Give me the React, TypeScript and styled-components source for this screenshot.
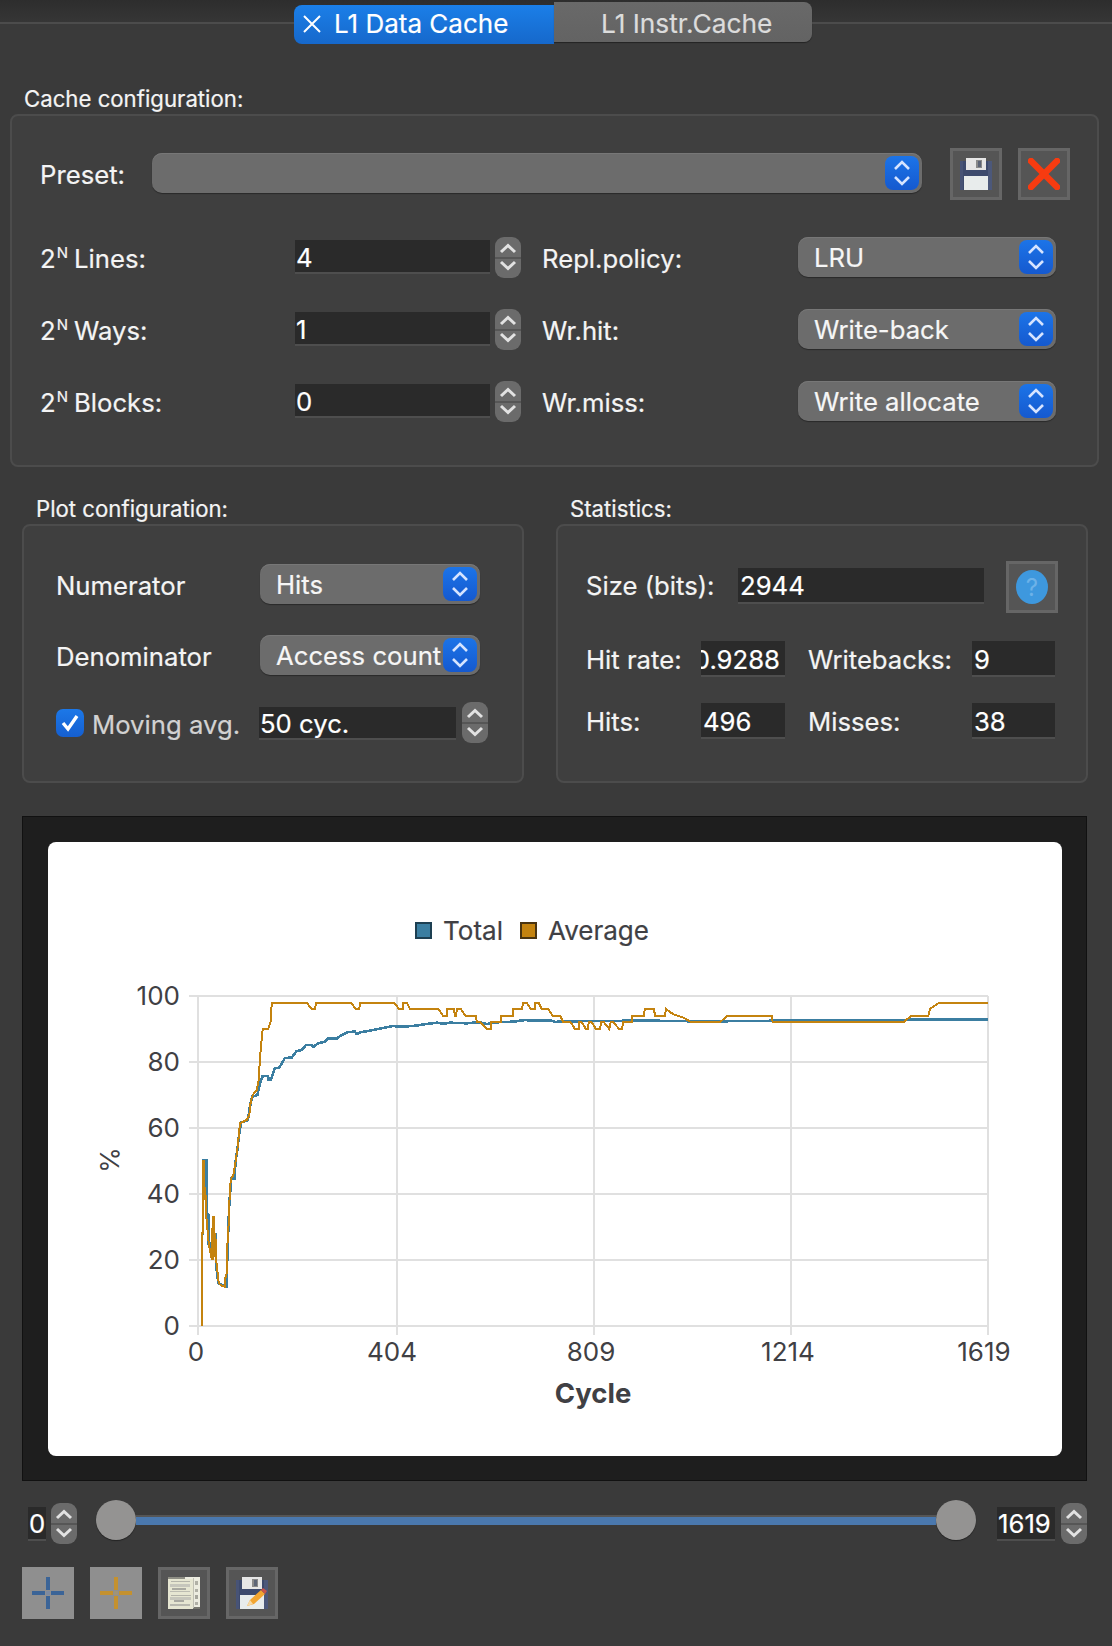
import React from "react";
import styled, { createGlobalStyle } from "styled-components";

const GlobalStyle = createGlobalStyle`
  html, body {
    margin: 0;
    padding: 0;
    background: #3a3a3a;
  }
  * {
    box-sizing: border-box;
  }
`;

const Page = styled.div`
  width: 1112px;
  height: 1646px;
  overflow: hidden;
  background: #3a3a3a;
  color: #f4f4f4;
  font-family: Inter, "Liberation Sans", sans-serif;
  font-size: 25.7px;
  -webkit-text-stroke: 0.2px;
`;

const TabBar = styled.div`
  display: flex;
  align-items: flex-start;
  height: 87px;
  padding: 2px 0 0 294px;
  background: linear-gradient(
    to bottom,
    #2d2d2d 0,
    #363636 22px,
    #4c4c4c 22px,
    #4c4c4c 24px,
    transparent 24px
  );
`;

const ActiveTab = styled.div`
  display: flex;
  align-items: center;
  gap: 13px;
  width: 260px;
  height: 39px;
  margin-top: 3px;
  padding: 0 0 2px 9px;
  border-radius: 8px 0 0 8px;
  background: linear-gradient(#1b7fe8, #1668cb);
  color: #fff;
  font-size: 26px;
`;

const IdleTab = styled.div`
  width: 258px;
  height: 40px;
  padding: 5px 0 0 47px;
  border-radius: 0 8px 8px 0;
  background: linear-gradient(#696969, #636363);
  box-shadow: 0 1px 1px rgba(0, 0, 0, 0.4);
  color: #dcdcdc;
  font-size: 26.3px;
  line-height: 34px;
`;

const GroupTitle = styled.div<{ $indent: number }>`
  height: 27px;
  padding-left: ${p => p.$indent}px;
  font-size: 22.2px;
  line-height: 24px;
`;

const GroupBox = styled.div<{ $height: number }>`
  height: ${p => p.$height}px;
  border: 2px solid #4c4c4c;
  border-radius: 8px;
  background: #3f3f3f;
`;

const CacheSection = styled.section`
  margin: 0 13px 0 10px;
`;

const CacheBody = styled.div`
  display: flex;
  flex-direction: column;
  padding: 32px 27px 0 28px;
`;

const FormRow = styled.div`
  display: flex;
  align-items: center;
  height: 40px;
  margin-bottom: 32px;
`;

const Label = styled.div<{ $width: number; $dim?: boolean }>`
  flex: none;
  width: ${p => p.$width}px;
  padding-top: 2px;
  color: ${p => (p.$dim ? "#d2d2d2" : "#f4f4f4")};
  white-space: nowrap;
`;

const StatLabel = styled(Label)<{ $left?: number }>`
  margin-left: ${p => p.$left ?? 0}px;
  padding-top: 0;
`;

const MovingLabel = styled(Label)`
  padding-top: 4px;
`;

const Sup = styled.sup`
  font-size: 15px;
  line-height: 0;
  vertical-align: 10px;
  margin: 0 6px 0 1px;
`;

const Combo = styled.div<{ $width?: number }>`
  display: flex;
  flex: ${p => (p.$width ? "none" : "1")};
  align-items: center;
  justify-content: space-between;
  width: ${p => (p.$width ? `${p.$width}px` : "auto")};
  height: 40px;
  padding: 0 3px 0 16px;
  border-radius: 10px;
  background: #6c6c6c;
  box-shadow: inset 0 1px 0 #777, 0 1px 1px rgba(0, 0, 0, 0.35);
  color: #f6f6f6;
  white-space: nowrap;
`;

const PresetRow = styled.div`
  display: flex;
  align-items: center;
  height: 52px;
  margin-bottom: 37px;

  & > ${Combo}, & > ${Label} {
    margin-bottom: 2px;
  }
`;

const ComboArrows = styled.div`
  display: flex;
  flex: none;
  align-items: center;
  justify-content: center;
  width: 34px;
  height: 34px;
  border-radius: 8px;
  background: linear-gradient(#1c74e8, #1559cf);
`;

const NumberField = styled.div<{ $width: number; $height?: number; $end?: boolean; $pad?: number }>`
  display: flex;
  flex: none;
  align-items: center;
  justify-content: ${p => (p.$end ? "flex-end" : "flex-start")};
  width: ${p => p.$width}px;
  height: ${p => p.$height ?? 34}px;
  padding: 2px ${p => (p.$end ? 5 : 0)}px 0 ${p => (p.$end ? 0 : p.$pad ?? 1)}px;
  overflow: hidden;
  border-bottom: 2px solid #4e4e4e;
  background: #2a2a2a;
  color: #fff;
  white-space: nowrap;
`;

const MovingField = styled(NumberField)`
  margin-top: 2px;
`;

const SpinArrows = styled.div<{ $left: number; $right?: number }>`
  display: flex;
  flex: none;
  flex-direction: column;
  align-items: center;
  justify-content: space-around;
  width: 26px;
  height: 41px;
  margin: 0 ${p => p.$right ?? 0}px 0 ${p => p.$left}px;
  padding: 3px 0;
  border-radius: 9px;
  background: linear-gradient(
    #6b6b6b 0,
    #6b6b6b 49%,
    #565656 49%,
    #565656 53%,
    #6b6b6b 53%
  );
`;

const IconButton = styled.div<{ $flat?: boolean; $left?: number }>`
  display: flex;
  flex: none;
  align-items: center;
  justify-content: center;
  width: 52px;
  height: 52px;
  margin-left: ${p => p.$left ?? 0}px;
  border: ${p => (p.$flat ? "none" : "3px solid #666")};
  background: ${p => (p.$flat ? "#8f8f8f" : "#555")};
`;

const MiddleSection = styled.section`
  display: flex;
  gap: 32px;
  margin: 30px 24px 0 22px;
`;

const Column = styled.div<{ $width: number }>`
  width: ${p => p.$width}px;
`;

const PlotBody = styled.div`
  display: flex;
  flex-direction: column;
  padding: 38px 0 0 32px;
`;

const PlotRow = styled.div<{ $height: number; $gap: number }>`
  display: flex;
  align-items: center;
  height: ${p => p.$height}px;
  margin-bottom: ${p => p.$gap}px;
`;

const CheckBox = styled.div`
  display: flex;
  flex: none;
  align-items: center;
  justify-content: center;
  width: 28px;
  height: 28px;
  margin-right: 8px;
  border-radius: 7px;
  background: linear-gradient(#1c78e8, #155fd0);
`;

const StatsBody = styled.div`
  display: flex;
  flex-direction: column;
  padding: 35px 0 0 28px;
`;

const StatRow = styled.div<{ $gap: number }>`
  display: flex;
  align-items: center;
  margin-bottom: ${p => p.$gap}px;
`;

const SizeRow = styled(StatRow)`
  & > ${StatLabel}, & > ${NumberField} {
    margin-bottom: 3px;
  }
`;

const ChartFrame = styled.div`
  width: 1065px;
  height: 665px;
  margin: 33px 0 0 22px;
  padding: 25px 24px 24px 25px;
  border: 1px solid #111;
  background: #1e1e1e;
`;

const ChartCard = styled.div`
  height: 614px;
  padding: 73px 46px 0 0;
  border-radius: 8px;
  background: #fff;
  color: #404044;
`;

const Legend = styled.div`
  display: flex;
  align-items: center;
  justify-content: center;
  height: 30px;
  font-size: 26px;
`;

const LegendSwatch = styled.span<{ $fill: string; $edge: string; $left?: number }>`
  width: 17px;
  height: 17px;
  margin: 0 11px 0 ${p => p.$left ?? 0}px;
  border: 2px solid ${p => p.$edge};
  background: ${p => p.$fill};
`;

const PlotSvg = styled.svg`
  display: block;
  width: 1014px;
  height: 511px;
  overflow: visible;
`;

const AxisText = styled.text`
  fill: #404044;
  font-family: Inter, "Liberation Sans", sans-serif;
  font-size: 26px;
`;

const AxisTitle = styled(AxisText)`
  font-weight: 700;
  font-size: 27.5px;
`;

const SliderRow = styled.div`
  display: flex;
  align-items: center;
  height: 41px;
  margin: 22px 0 0 28px;
`;

const RangeSlider = styled.div`
  display: flex;
  align-items: center;
  width: 880px;
  height: 41px;
  margin: 0 21px 0 19px;
  padding-bottom: 8px;
`;

const Thumb = styled.div`
  flex: none;
  width: 40px;
  height: 40px;
  border-radius: 50%;
  background: #949392;
  box-shadow: 0 1px 1px rgba(0, 0, 0, 0.4);
`;

const Track = styled.div`
  flex: 1;
  height: 10px;
  border-top: 2px solid #555;
  background: #4a78ae;
`;

const ToolRow = styled.div`
  display: flex;
  gap: 16px;
  margin: 23px 0 0 22px;
`;

const Chevrons = () => (
  <svg width="22" height="30" viewBox="0 0 22 30" fill="none" stroke="#d6e4ff" strokeWidth="2.6">
    <path d="M4 11 L11 4 L18 11" />
    <path d="M4 19 L11 26 L18 19" />
  </svg>
);

const Spin = ({ left, right }: { left: number; right?: number }) => (
  <SpinArrows $left={left} $right={right}>
    <svg width="18" height="11" viewBox="0 0 18 11" fill="none" stroke="#e2e2e2" strokeWidth="3">
      <path d="M2 9 L9 2.5 L16 9" />
    </svg>
    <svg width="18" height="11" viewBox="0 0 18 11" fill="none" stroke="#e2e2e2" strokeWidth="3">
      <path d="M2 2 L9 8.5 L16 2" />
    </svg>
  </SpinArrows>
);

const Floppy = ({ pencil }: { pencil?: boolean }) => (
  <svg width="32" height="32" viewBox="0 0 32 32" shapeRendering="crispEdges">
    <rect x="0" y="3" width="32" height="29" fill="#3d4a6d" />
    <rect x="28" y="3" width="4" height="29" fill="#4c587a" />
    <rect x="0" y="3" width="3" height="29" fill="#475376" />
    <rect x="6" y="0" width="20" height="12" fill="#e6e6e6" />
    <rect x="16" y="2" width="6" height="8" fill="#8a8a8a" />
    <rect x="18" y="3" width="3" height="6" fill="#5c6476" />
    <rect x="4" y="18" width="24" height="14" fill="#e8ecec" />
    {pencil && (
      <g shapeRendering="auto">
        <path d="M11 29 L14 23 L25 13 L29 17 L18 27 Z" fill="#f2a531" />
        <path d="M25 13 L27 11 L31 14 L29 17 Z" fill="#c8534a" />
        <path d="M11 29 L14 23 L17 27 Z" fill="#f6d9a6" />
      </g>
    )}
  </svg>
);

const RedCross = () => (
  <svg width="32" height="32" viewBox="0 0 32 32" fill="none" stroke="#f73b10" strokeWidth="6.5">
    <path d="M3 3 L29 29" strokeLinecap="round" />
    <path d="M29 3 L3 29" strokeLinecap="round" />
  </svg>
);

const HelpIcon = () => (
  <svg width="32" height="34" viewBox="0 0 32 34">
    <ellipse cx="16" cy="17" rx="16" ry="17" fill="#3e98de" />
    <text x="16" y="26" textAnchor="middle" fontSize="24" fontFamily="Inter, sans-serif" fill="#6db2e8">
      ?
    </text>
  </svg>
);

const Crosshair = ({ color, core }: { color: string; core: string }) => (
  <svg width="32" height="32" viewBox="0 0 32 32" shapeRendering="crispEdges">
    <rect x="14" y="0" width="4" height="13" fill={color} />
    <rect x="14" y="19" width="4" height="13" fill={color} />
    <rect x="0" y="14" width="13" height="4" fill={color} />
    <rect x="19" y="14" width="13" height="4" fill={color} />
    <rect x="14" y="14" width="4" height="4" fill={core} />
  </svg>
);

const ReportIcon = () => (
  <svg width="32" height="32" viewBox="0 0 32 32" shapeRendering="crispEdges">
    <rect x="0" y="0" width="17" height="2" fill="#8e8e84" />
    <rect x="17" y="0" width="15" height="31" fill="#ecece0" />
    <rect x="25" y="30" width="7" height="2" fill="#77776f" />
    <rect x="0" y="2" width="25" height="30" fill="#e6e6d2" />
    <rect x="25" y="1" width="1" height="30" fill="#c0c0b4" />
    <rect x="3" y="4" width="19" height="1" fill="#b4b4aa" />
    <rect x="2" y="7" width="20" height="3" fill="#c6c6bc" />
    <rect x="4" y="11" width="14" height="2" fill="#a9a9a1" />
    <rect x="2" y="14" width="20" height="1" fill="#bcbcb2" />
    <rect x="3" y="18" width="20" height="1" fill="#b4b4aa" />
    <rect x="2" y="20" width="21" height="3" fill="#c6c6bc" />
    <rect x="6" y="23" width="10" height="2" fill="#a9a9a1" />
    <rect x="2" y="27" width="20" height="2" fill="#b8b8ae" />
    <rect x="27" y="4" width="3" height="4" fill="#b0b0a6" />
    <rect x="27" y="12" width="3" height="3" fill="#b0b0a6" />
    <rect x="27" y="18" width="3" height="4" fill="#a5a59c" />
    <rect x="27" y="25" width="3" height="3" fill="#b0b0a6" />
  </svg>
);

// points read off the reference, full page coordinates
const toPoints = (originX: number, raw: string) =>
  raw
    .trim()
    .split(/\s+/)
    .map(pair => {
      const [x, y] = pair.split(",").map(Number);
      return `${(originX + x / 3).toFixed(1)},${(980 + y / 3).toFixed(1)}`;
    })
    .join(" ");

const averageLine =
  toPoints(
    180,
    `66,1038 66,760 68,760 68,542 71,542 71,580 73,660 76,620 78,700 82,740 84,770 88,800 92,820 96,840
     98,710 102,710 100,840 106,760 108,820 110,860 114,885 116,910 125,918 134,920 136,895 140,880 142,800
     146,730 150,620 154,595 160,585 166,550 172,510 176,470 180,430 190,425 200,420 208,405 212,365 218,345
     230,330 236,300 240,235 244,190 248,148 265,146 272,125 274,85 276,68 380,68 395,87 405,87 408,68 512,68
     528,87 538,87 540,68 642,68 658,88 668,88 670,68 680,68 690,87 775,87 790,108 800,108 802,87 822,87
     825,108 829,108 830,87 842,87 856,107 888,107 890,126`
  ) +
  " " +
  toPoints(
    480,
    `0,127 20,147 34,147 34,127 62,127 62,107 98,107 98,87 125,87 130,68 140,68 152,87 164,87 166,68 176,68
     185,87 204,87 218,107 240,107 250,127 272,127 285,147 296,147 298,127 305,127 318,147 324,147 326,127
     335,127 348,147 360,147 364,127 372,127 388,147 392,127 400,127 418,147 426,147 430,127 455,127 455,107
     492,107 494,87 522,87 525,107 555,107 558,87 580,103 610,113 635,127 720,127 742,107 875,107 878,127
     1270,127 1295,107 1345,107 1350,87 1378,68 1525,68`
  );

const totalLine =
  toPoints(
    180,
    `66,1038 66,760 69,760 69,542 80,542 80,700 86,706 86,790 94,790 94,820 100,780 106,760 108,850 115,910
     140,920 142,830 148,670 154,595 165,595 166,550 172,510 178,460 184,427 204,420 208,390 216,350 232,345
     240,310 248,288 264,288 266,300 272,300 284,265 298,263 314,235 336,232 350,213 365,210 378,195 395,195
     400,201 415,190 435,185 442,176 470,176 480,168 505,156 525,155 530,162 545,156 565,153 590,148 620,142
     640,138 660,140 700,138 740,132 770,128 790,131 810,128 860,130 880,128 900,128`
  ) +
  " " +
  toPoints(
    480,
    `0,127 20,132 50,127 100,125 135,120 155,122 215,122 225,126 250,124 400,123 500,121 520,122 640,124
     715,124 900,122 1200,120 1525,118`
  );

const yTicks = [
  { label: "100", y: 996 },
  { label: "80", y: 1062 },
  { label: "60", y: 1128 },
  { label: "40", y: 1194 },
  { label: "20", y: 1260 },
  { label: "0", y: 1326 },
];

const xTicks = [
  { label: "0", x: 198, at: 196 },
  { label: "404", x: 397, at: 392 },
  { label: "809", x: 594, at: 591 },
  { label: "1214", x: 791, at: 788 },
  { label: "1619", x: 988, at: 984 },
];

const Plot = () => (
  <PlotSvg viewBox="48 945 1014 511">
    {yTicks.map(t => (
      <g key={t.label}>
        <line x1={189} x2={988} y1={t.y} y2={t.y} stroke="#e0e0e0" strokeWidth="2" />
        <AxisText x={180} y={t.y + 9} textAnchor="end">
          {t.label}
        </AxisText>
      </g>
    ))}
    {xTicks.map(t => (
      <g key={t.label}>
        <line x1={t.x} x2={t.x} y1={996} y2={1335} stroke="#e0e0e0" strokeWidth="2" />
        <AxisText x={t.at} y={1361} textAnchor="middle">
          {t.label}
        </AxisText>
      </g>
    ))}
    <polyline points={totalLine} fill="none" stroke="#3b7ea1" strokeWidth="2.6" shapeRendering="crispEdges" />
    <polyline points={averageLine} fill="none" stroke="#c4830f" strokeWidth="2" shapeRendering="crispEdges" />
    <AxisTitle x={593} y={1403} textAnchor="middle">
      Cycle
    </AxisTitle>
    <AxisText x={0} y={0} textAnchor="middle" transform="translate(119 1160) rotate(-90)">
      %
    </AxisText>
  </PlotSvg>
);

const formRows = [
  { name: "Lines:", value: "4", policy: "Repl.policy:", choice: "LRU" },
  { name: "Ways:", value: "1", policy: "Wr.hit:", choice: "Write-back" },
  { name: "Blocks:", value: "0", policy: "Wr.miss:", choice: "Write allocate" },
];

export default function App() {
  return (
    <Page>
      <GlobalStyle />
      <TabBar>
        <ActiveTab>
          <svg width="18" height="18" viewBox="0 0 18 18" stroke="#fff" strokeWidth="2">
            <path d="M1 1 L17 17 M17 1 L1 17" />
          </svg>
          L1 Data Cache
        </ActiveTab>
        <IdleTab>L1 Instr.Cache</IdleTab>
      </TabBar>

      <CacheSection>
        <GroupTitle $indent={14}>Cache configuration:</GroupTitle>
        <GroupBox $height={353}>
          <CacheBody>
            <PresetRow>
              <Label $width={112}>Preset:</Label>
              <Combo $width={770}>
                <span />
                <ComboArrows>
                  <Chevrons />
                </ComboArrows>
              </Combo>
              <IconButton $left={28}>
                <Floppy />
              </IconButton>
              <IconButton $left={16}>
                <RedCross />
              </IconButton>
            </PresetRow>
            {formRows.map(r => (
              <FormRow key={r.name}>
                <Label $width={255}>
                  2<Sup>N</Sup>
                  {r.name}
                </Label>
                <NumberField $width={195}>{r.value}</NumberField>
                <Spin left={5} right={21} />
                <Label $width={256}>{r.policy}</Label>
                <Combo $width={258}>
                  {r.choice}
                  <ComboArrows>
                    <Chevrons />
                  </ComboArrows>
                </Combo>
              </FormRow>
            ))}
          </CacheBody>
        </GroupBox>
      </CacheSection>

      <MiddleSection>
        <Column $width={502}>
          <GroupTitle $indent={14}>Plot configuration:</GroupTitle>
          <GroupBox $height={259}>
            <PlotBody>
              <PlotRow $height={40} $gap={31}>
                <Label $width={204}>Numerator</Label>
                <Combo $width={220}>
                  Hits
                  <ComboArrows>
                    <Chevrons />
                  </ComboArrows>
                </Combo>
              </PlotRow>
              <PlotRow $height={40} $gap={27}>
                <Label $width={204}>Denominator</Label>
                <Combo $width={220}>
                  Access count
                  <ComboArrows>
                    <Chevrons />
                  </ComboArrows>
                </Combo>
              </PlotRow>
              <PlotRow $height={41} $gap={0}>
                <CheckBox>
                  <svg width="20" height="20" viewBox="0 0 20 20" fill="none" stroke="#fff" strokeWidth="3.4">
                    <path d="M3 10 L8 16 L17 3" />
                  </svg>
                </CheckBox>
                <MovingLabel $width={167} $dim>
                  Moving avg.
                </MovingLabel>
                <MovingField $width={197} $height={33}>
                  50 cyc.
                </MovingField>
                <Spin left={6} />
              </PlotRow>
            </PlotBody>
          </GroupBox>
        </Column>
        <Column $width={532}>
          <GroupTitle $indent={14}>Statistics:</GroupTitle>
          <GroupBox $height={259}>
            <StatsBody>
              <SizeRow $gap={28}>
                <StatLabel $width={152}>Size (bits):</StatLabel>
                <NumberField $width={246} $height={36} $pad={2}>
                  2944
                </NumberField>
                <IconButton $left={22}>
                  <HelpIcon />
                </IconButton>
              </SizeRow>
              <StatRow $gap={26}>
                <StatLabel $width={115}>Hit rate:</StatLabel>
                <NumberField $width={84} $height={36} $end>
                  0.9288
                </NumberField>
                <StatLabel $width={164} $left={23}>
                  Writebacks:
                </StatLabel>
                <NumberField $width={83} $height={36} $pad={2}>
                  9
                </NumberField>
              </StatRow>
              <StatRow $gap={0}>
                <StatLabel $width={115}>Hits:</StatLabel>
                <NumberField $width={84} $height={36} $pad={2}>
                  496
                </NumberField>
                <StatLabel $width={164} $left={23}>
                  Misses:
                </StatLabel>
                <NumberField $width={83} $height={36} $pad={2}>
                  38
                </NumberField>
              </StatRow>
            </StatsBody>
          </GroupBox>
        </Column>
      </MiddleSection>

      <ChartFrame>
        <ChartCard>
          <Legend>
            <LegendSwatch $fill="#3b7ea1" $edge="#1d3f52" />
            Total
            <LegendSwatch $fill="#c4830f" $edge="#4a3410" $left={17} />
            Average
          </Legend>
          <Plot />
        </ChartCard>
      </ChartFrame>

      <SliderRow>
        <NumberField $width={18}>0</NumberField>
        <Spin left={5} />
        <RangeSlider>
          <Thumb />
          <Track />
          <Thumb />
        </RangeSlider>
        <NumberField $width={58}>1619</NumberField>
        <Spin left={6} />
      </SliderRow>

      <ToolRow>
        <IconButton $flat>
          <Crosshair color="#3b6497" core="#7d8aa0" />
        </IconButton>
        <IconButton $flat>
          <Crosshair color="#c4912f" core="#a09478" />
        </IconButton>
        <IconButton>
          <ReportIcon />
        </IconButton>
        <IconButton>
          <Floppy pencil />
        </IconButton>
      </ToolRow>
    </Page>
  );
}
